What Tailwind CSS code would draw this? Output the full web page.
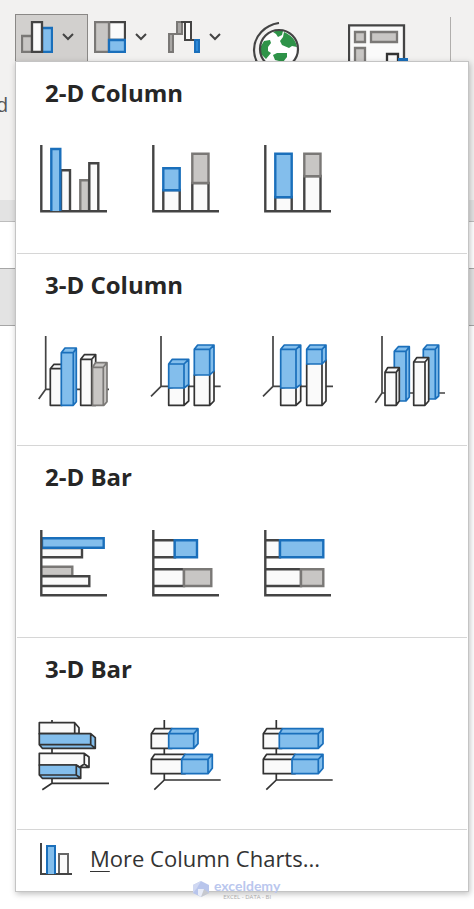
<!doctype html>
<html lang="en">
<head>
	<meta charset="UTF-8">
	<meta name="viewport" content="width=device-width, initial-scale=1.0">
	<title>Column Charts</title>
	<script src="https://cdn.jsdelivr.net/npm/@tailwindcss/browser@4"></script>
</head>
<body class="relative min-h-screen overflow-x-hidden bg-white font-['Open_Sans',sans-serif] text-[#262626]">

	<!-- ribbon -->
	<header class="h-[200px] bg-[#f2f1f0] pt-[14px]">
		<div class="flex items-start pl-[15px]">
			<button type="button" aria-label="Column chart" aria-expanded="true" class="flex h-12 w-[73px] shrink-0 items-center gap-[9px] border border-[#8a8886] bg-[#d2d0ce] pb-[2px] pl-[5px]">
				<svg class="h-8 w-8" viewBox="0 0 32 32" stroke-width="2.3">
					<path d="M1 15H11V31H1Z" fill="#c8c6c4" stroke="#7a7876"/>
					<path d="M21 7H31V31H21Z" fill="#83beec" stroke="#1a6fbb"/>
					<path d="M11 1H21V31H11Z" fill="#fafafa" stroke="#444"/>
				</svg>
				<svg class="h-3 w-3" viewBox="0 0 12 12" fill="none" stroke="#444" stroke-width="2"><path d="M1 3L6 8L11 3"/></svg>
			</button>
			<button type="button" aria-label="Hierarchy chart" class="flex h-12 w-[74px] shrink-0 items-center gap-[9px] pb-[2px] pl-[6px]">
				<svg class="h-8 w-8" viewBox="0 0 32 32" stroke-width="2.3">
					<path d="M15 1H31V19H15Z" fill="#fafafa" stroke="#444"/>
					<path d="M1 1H15V31H1Z" fill="#c8c6c4" stroke="#7a7876"/>
					<path d="M15 19H31V31H15Z" fill="#83beec" stroke="#1a6fbb"/>
				</svg>
				<svg class="h-3 w-3" viewBox="0 0 12 12" fill="none" stroke="#444" stroke-width="2"><path d="M1 3L6 8L11 3"/></svg>
			</button>
			<button type="button" aria-label="Waterfall chart" class="flex h-12 w-[74px] shrink-0 items-center gap-[9px] pb-[2px] pl-[6px]">
				<svg class="h-8 w-8" viewBox="0 0 32 32" stroke-width="2">
					<path d="M1 13H5V31H1Z" fill="#a8a6a4" stroke="#7a7876"/>
					<path d="M9 1H14V13H9Z" fill="#a8a6a4" stroke="#7a7876"/>
					<path d="M5 13H9" stroke="#7a7876"/>
					<path d="M17 1H23V19H17Z" fill="#fafafa" stroke="#444"/>
					<path d="M13 1H17M23 19H27" stroke="#444"/>
					<path d="M27 19H31V31H27Z" fill="#2b88d8" stroke="#1a6fbb"/>
				</svg>
				<svg class="h-3 w-3" viewBox="0 0 12 12" fill="none" stroke="#444" stroke-width="2"><path d="M1 3L6 8L11 3"/></svg>
			</button>
			<button type="button" aria-label="Maps" class="mt-2 ml-4 shrink-0">
				<svg class="h-12 w-12" viewBox="0 0 48 48" fill="none">
					<circle cx="27" cy="27" r="19" fill="#fff"/>
					<path d="M9 24L12 19L18 18L19 21L16 25L16 29L19 31L14 37L9 32Z" fill="#2e9348"/>
					<path d="M21 10L26 8L31 9L30 13L26 15L24 12Z" fill="#2e9348"/>
					<path d="M32 10C39 13 44 18 45 25L40 24L37 26L30 23L28 19L31 15Z" fill="#2e9348"/>
					<path d="M21 33L25 31L35 31L35 35L31 40L23 38Z" fill="#2e9348"/>
					<circle cx="27" cy="27" r="19" stroke="#444" stroke-width="2.2"/>
					<path d="M27 1C13 3 2 14 2 28C2 33 3 37 6 42" stroke="#444" stroke-width="2.2"/>
				</svg>
			</button>
			<button type="button" aria-label="PivotChart" class="mt-[10px] ml-[48px] shrink-0">
				<svg class="h-12 w-[60px]" viewBox="0 0 60 48" stroke-width="2.3">
					<path d="M1 1.3H56V47H1Z" fill="#fafafa" stroke="#444"/>
					<path d="M7 8H17V18H7ZM23 8H49V18H23ZM7 24H17V47H7Z" fill="#c8c6c4" stroke="#7a7876"/>
					<path d="M39 47V30H50V47" fill="#fafafa" stroke="#333"/>
					<path d="M50 34H60V47H50Z" fill="#1a6fbb"/>
				</svg>
			</button>
			<div class="mt-[3px] ml-[42px] h-20 w-px shrink-0 bg-[#b0aeac]"></div>
		</div>
		<span class="absolute top-[91px] left-[-4px] text-xl text-[#555]">d</span>
	</header>
	<div class="h-[22px] border-b border-[#bdbdbd] bg-[#e3e3e3]"></div>
	<div class="h-[46px] bg-white"></div>
	<div class="h-[58px] border-y border-[#a6a6a6] bg-[#e3e3e3]"></div>

	<!-- chart menu -->
	<main class="absolute top-[61px] right-[5px] left-[15px] border border-[#c4c4c4] bg-white shadow-[1px_2px_6px_rgba(0,0,0,0.25)]">
		<section class="mx-px h-48 border-b border-[#d6d6d6] pl-[21px]">
			<h2 class="pt-[15px] pl-[7px] text-2xl leading-8 font-bold">2-D Column</h2>
			<div class="mt-[35px] flex gap-10">
				<button type="button" aria-label="Clustered Column">
					<svg class="h-[72px] w-[72px]" viewBox="0 0 72 72" stroke-width="2.4">
						<path d="M23 67V26.3H32V67" fill="#fafafa" stroke="#444"/>
						<path d="M42.3 67V36.3H51V67" fill="#c8c6c4" stroke="#7a7876"/>
						<path d="M51.3 67V19.3H60.3V67" fill="#fafafa" stroke="#444"/>
						<path d="M3.3 1V67.3H69" fill="none" stroke="#444"/>
						<path d="M13.3 67V5H22.3V67" fill="#83beec" stroke="#1a6fbb"/>
					</svg>
				</button>
				<button type="button" aria-label="Stacked Column">
					<svg class="h-[72px] w-[72px]" viewBox="0 0 72 72" stroke-width="2.4">
						<path d="M13.3 67V46H29.7V67M42.3 67V39H58.5V67" fill="#fafafa" stroke="#444"/>
						<path d="M13.3 24.3H29.7V46.3H13.3Z" fill="#83beec" stroke="#1a6fbb"/>
						<path d="M42.3 9.7H58.5V39H42.3Z" fill="#c8c6c4" stroke="#7a7876"/>
						<path d="M3.3 1V67.3H69" fill="none" stroke="#444"/>
					</svg>
				</button>
				<button type="button" aria-label="100% Stacked Column">
					<svg class="h-[72px] w-[72px]" viewBox="0 0 72 72" stroke-width="2.4">
						<path d="M13.3 67V53H29.7V67M42.3 67V32H58.5V67" fill="#fafafa" stroke="#444"/>
						<path d="M13.3 9.7H29.7V53.3H13.3Z" fill="#83beec" stroke="#1a6fbb"/>
						<path d="M42.3 9.7H58.5V32.3H42.3Z" fill="#c8c6c4" stroke="#7a7876"/>
						<path d="M3.3 1V67.3H69" fill="none" stroke="#444"/>
					</svg>
				</button>
			</div>
		</section>

		<section class="mx-px h-48 border-b border-[#d6d6d6] pl-[21px]">
			<h2 class="pt-[15px] pl-[7px] text-2xl leading-8 font-bold">3-D Column</h2>
			<div class="mt-[35px] flex gap-10">
				<button type="button" aria-label="3-D Clustered Column">
					<svg class="h-[72px] w-[72px]" viewBox="0 0 72 72" stroke-width="1.7" stroke-linejoin="round">
						<path d="M7.7 0V53.3H71M7.7 53.3L.7 63" fill="none" stroke="#444"/>
						<path d="M12.3 32.7L16 28.3H24V69.3H12.3ZM12.3 32.7H24" fill="#fafafa" stroke="#333"/>
						<path d="M23.3 16.7L27 12H38.3V65.7L35.3 69.3H23.3ZM23.3 16.7H35.3V69.3M35.3 16.7L38.3 12" fill="#83beec" stroke="#1a6fbb"/>
						<path d="M42.7 23.3L46.3 18.7H57.7V69.3H42.7ZM42.7 23.3H53.7V69.3M53.7 23.3L57.7 18.7" fill="#fafafa" stroke="#333"/>
						<path d="M54.5 31.3L57.5 26.7H69V65.7L66 69.3H54.5ZM54.5 31.3H65.3V69.3M65.3 31.3L69 26.7" fill="#c8c6c4" stroke="#7a7876"/>
					</svg>
				</button>
				<button type="button" aria-label="3-D Stacked Column">
					<svg class="h-[72px] w-[72px]" viewBox="0 0 72 72" stroke-width="1.7" stroke-linejoin="round">
						<path d="M11 0V50.3H70.7M11 50.3L1 60.3" fill="none" stroke="#444"/>
						<path d="M18.7 52L38.7 49V65L34 69.3H18.7ZM34 52V69.3M44.3 39L64 35V65L59.7 69.3H44.3ZM59.7 39V69.3" fill="#fafafa" stroke="#333"/>
						<path d="M18.7 28L22.3 23.3H38.7V48.5L34 52H18.7ZM18.7 28H34V52M34 28L38.7 23.3M44.3 13.3L47.7 9H64V35L59.7 39H44.3ZM44.3 13.3H59.7V39M59.7 13.3L64 9" fill="#83beec" stroke="#1a6fbb"/>
					</svg>
				</button>
				<button type="button" aria-label="3-D 100% Stacked Column">
					<svg class="h-[72px] w-[72px]" viewBox="0 0 72 72" stroke-width="1.7" stroke-linejoin="round">
						<path d="M11 0V50.3H71M11 50.3L1 60.3" fill="none" stroke="#444"/>
						<path d="M18.7 52L38.7 49V65L34 69.3H18.7ZM34 52V69.3M44.7 28L64 24V65L60 69.3H44.7ZM60 28V69.3" fill="#fafafa" stroke="#333"/>
						<path d="M18.7 13.3L22.3 9H38.7V48.5L34 52H18.7ZM18.7 13.3H34V52M34 13.3L38.7 9M44.7 13.3L48 9H64V24L60 28H44.7ZM44.7 13.3H60V28M60 13.3L64 9" fill="#83beec" stroke="#1a6fbb"/>
					</svg>
				</button>
				<button type="button" aria-label="3-D Column">
					<svg class="h-[72px] w-[72px]" viewBox="0 0 72 72" stroke-width="1.7" stroke-linejoin="round">
						<path d="M8 0V57H71M8 57L1.3 66.7" fill="none" stroke="#444"/>
						<path d="M20.3 15.3L24.3 10.7H35.3V61L32 65H20.3ZM20.3 15.3H32V65M32 15.3L35.3 10.7M49.3 13.3L53 9H64.7V60L61.3 63H49.3ZM49.3 13.3H61.3V63M61.3 13.3L64.7 9" fill="#83beec" stroke="#1a6fbb"/>
						<path d="M11 36.3L13.7 31.7H25.3V65L22.3 69.3H11ZM11 36.3H22.3V69.3M22.3 36.3L25.3 31.7M39.7 26L42.7 21.7H54.7V65L51 69.3H39.7ZM39.7 26H51V69.3M51 26L54.7 21.7" fill="#fafafa" stroke="#333"/>
					</svg>
				</button>
			</div>
		</section>

		<section class="mx-px h-48 border-b border-[#d6d6d6] pl-[21px]">
			<h2 class="pt-[15px] pl-[7px] text-2xl leading-8 font-bold">2-D Bar</h2>
			<div class="mt-[35px] flex gap-10">
				<button type="button" aria-label="Clustered Bar">
					<svg class="h-[72px] w-[72px]" viewBox="0 0 72 72" stroke-width="2.4">
						<path d="M3 20H44V29.3H3" fill="#fafafa" stroke="#444"/>
						<path d="M4 10.3H65.7V19.7H4Z" fill="#83beec" stroke="#1a6fbb"/>
						<path d="M3 38.7H34.3V48H3" fill="#c8c6c4" stroke="#7a7876"/>
						<path d="M3 48.3H51.3V58H3" fill="#fafafa" stroke="#444"/>
						<path d="M3.3 2V67.3H69" fill="none" stroke="#444"/>
					</svg>
				</button>
				<button type="button" aria-label="Stacked Bar">
					<svg class="h-[72px] w-[72px]" viewBox="0 0 72 72" stroke-width="2.4">
						<path d="M3 12.3H25V29.3H3M3 41.3H34V58H3" fill="#fafafa" stroke="#444"/>
						<path d="M24.7 12.3H47V29.3H24.7Z" fill="#83beec" stroke="#1a6fbb"/>
						<path d="M34 41.3H61.3V58H34Z" fill="#c8c6c4" stroke="#7a7876"/>
						<path d="M3.3 2V67.3H69" fill="none" stroke="#444"/>
					</svg>
				</button>
				<button type="button" aria-label="100% Stacked Bar">
					<svg class="h-[72px] w-[72px]" viewBox="0 0 72 72" stroke-width="2.4">
						<path d="M3 12.3H18V29.3H3M3 41.3H39V58H3" fill="#fafafa" stroke="#444"/>
						<path d="M18 12.3H61.3V29.3H18Z" fill="#83beec" stroke="#1a6fbb"/>
						<path d="M39 41.3H61.3V58H39Z" fill="#c8c6c4" stroke="#7a7876"/>
						<path d="M3.3 2V67.3H69" fill="none" stroke="#444"/>
					</svg>
				</button>
			</div>
		</section>

		<section class="mx-px h-48 border-b border-[#d6d6d6] pl-[21px]">
			<h2 class="pt-[15px] pl-[7px] text-2xl leading-8 font-bold">3-D Bar</h2>
			<div class="mt-[35px] flex gap-10">
				<button type="button" aria-label="3-D Clustered Bar">
					<svg class="h-[72px] w-[72px]" viewBox="0 0 72 72" stroke-width="1.7" stroke-linejoin="round" stroke="#333">
						<path d="M14 0V63.3H71M14 63.3L4.3 69.7" fill="none"/>
						<path d="M1.3 2.7H36.7L41 7.7V13.7H1.3ZM36.7 2.7V13.7M1.3 33.3H46.3L51 37V47.3H42L38 45H1.3ZM46.3 33.3V44L51 47.3M46.3 44L42 47" fill="#fafafa"/>
						<path d="M1.3 13.7H52.7L57.3 17.7V28.3H4.3L1.3 24.7ZM52.7 13.7V24.7H1.3M52.7 24.7L57.3 28.3M1.3 45H38.3L42.7 48.3V58.3H4.3L1.3 55ZM38.3 45V55H1.3M38.3 55L42.7 58.3" fill="#83beec"/>
					</svg>
				</button>
				<button type="button" aria-label="3-D Stacked Bar">
					<svg class="h-[72px] w-[72px]" viewBox="0 0 72 72" stroke-width="1.7" stroke-linejoin="round">
						<path d="M14.3 0V60H70.7M14.3 60L4.3 69.7" fill="none" stroke="#333"/>
						<path d="M1.3 13.7L4.7 8.7H22V28.3H1.3ZM1.3 13.7H19M1.3 39.3L4.7 34.3H35V53.7H1.3ZM1.3 39.3H32" fill="#fafafa" stroke="#333"/>
						<path d="M18.7 13.7L21.7 8.7H48V23.7L43.7 28.3H18.7ZM18.7 13.7H43.7V28.3M43.7 13.7L48 8.7M31.7 39.3L35 34.3H62.3V48.3L58 53.7H31.7ZM31.7 39.3H58V53.7M58 39.3L62.3 34.3" fill="#83beec" stroke="#1a6fbb"/>
					</svg>
				</button>
				<button type="button" aria-label="3-D 100% Stacked Bar">
					<svg class="h-[72px] w-[72px]" viewBox="0 0 72 72" stroke-width="1.7" stroke-linejoin="round">
						<path d="M14.3 0V60H70.7M14.3 60L4.3 69.7" fill="none" stroke="#333"/>
						<path d="M1.3 13.7L4.7 8.7H20V28.3H1.3ZM1.3 13.7H18M1.3 39.3L4.7 34.3H33V53.7H1.3ZM1.3 39.3H30" fill="#fafafa" stroke="#333"/>
						<path d="M17.3 13.7L20.3 8.7H61V23.7L56.3 28.3H17.3ZM17.3 13.7H56.3V28.3M56.3 13.7L61 8.7M30 39.3L33 34.3H61V48.3L56.3 53.7H30ZM30 39.3H56.3V53.7M56.3 39.3L61 34.3" fill="#83beec" stroke="#1a6fbb"/>
					</svg>
				</button>
			</div>
		</section>

		<button type="button" class="flex h-[61px] w-full items-center gap-[17px] pb-[4px] pl-6 text-[22px] text-[#333]">
			<svg class="h-[34px] w-[33px] shrink-0" viewBox="0 0 33 34" stroke-width="2">
				<path d="M19 32V12H28V32" fill="#fafafa" stroke="#666"/>
				<path d="M1 1V32H32" fill="none" stroke="#444"/>
				<path d="M7 32V4H15V32" fill="#83beec" stroke="#1a6fbb"/>
			</svg>
			<span class="whitespace-nowrap"><u class="decoration-1 underline-offset-4">M</u>ore Column Charts...</span>
		</button>
	</main>

	<!-- watermark -->
	<div class="absolute top-[878px] left-[192px] flex items-center gap-1">
		<svg class="h-[18px] w-[18px]" viewBox="0 0 18 18">
			<path d="M9 1L17 5V13L9 17L1 13V5Z" fill="#b8c5ec"/>
			<path d="M1 5L9 1L5 8L1 13Z" fill="#d0d8f2"/>
			<path d="M6 9H12V15L9 17L6 15Z" fill="#e8ecf8"/>
			<path d="M12 9L17 13L9 17Z" fill="#c6c8ce"/>
		</svg>
		<div class="flex flex-col items-center">
			<span class="font-['Lato',sans-serif] text-[14px] leading-4 font-bold text-[#bac7ee]">exceldemy</span>
			<span class="text-[6px] leading-[6px] text-[#aaa]">EXCEL - DATA - BI</span>
		</div>
	</div>

</body>
</html>
